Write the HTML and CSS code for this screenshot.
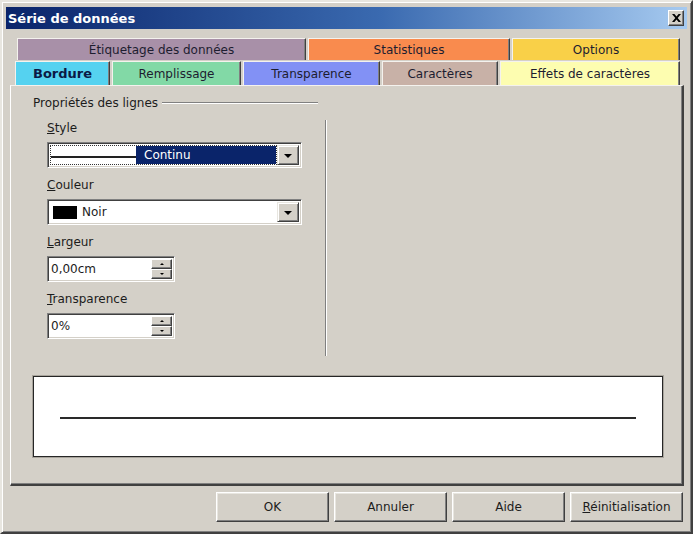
FILE: index.html
```html
<!DOCTYPE html>
<html lang="fr">
<head>
	<meta charset="UTF-8">
	<title>Série de données</title>
	<link rel="stylesheet" href="styles.css">
</head>
<body>
	<div class="window">
		<div class="titlebar">
			<span class="title">Série de données</span>
			<span class="close"><svg width="9" height="8" viewBox="0 0 9 8"><path d="M0 0h2.4l2.1 2.6L6.6 0H9L5.7 4 9 8H6.6L4.5 5.4 2.4 8H0l3.3-4z" fill="#000"/></svg></span>
		</div>

		<div class="tabs">
			<div class="tabrow back">
				<div class="tab t-etiq">Étiquetage des données</div>
				<div class="tab t-stat">Statistiques</div>
				<div class="tab t-opt">Options</div>
			</div>
			<div class="tabrow front">
				<div class="tab t-bord active">Bordure</div>
				<div class="tab t-remp">Remplissage</div>
				<div class="tab t-trans">Transparence</div>
				<div class="tab t-car">Caractères</div>
				<div class="tab t-eff">Effets de caractères</div>
			</div>
		</div>

		<div class="panel">
			<div class="props">
				<div class="props-main">
					<div class="group-head"><span>Propriétés des lignes</span><i class="etch"></i></div>
					<div class="group-body">
						<div class="field">
							<label><u>S</u>tyle</label>
							<div class="select focus">
								<div class="sel-inner">
									<span class="line-preview"><i></i></span>
									<span class="sel-text hl">Continu</span>
								</div>
								<span class="drop"><i class="arrow"></i></span>
							</div>
						</div>
						<div class="field">
							<label><u>C</u>ouleur</label>
							<div class="select">
								<div class="sel-inner">
									<span class="swatch"></span>
									<span class="sel-text">Noir</span>
								</div>
								<span class="drop"><i class="arrow"></i></span>
							</div>
						</div>
						<div class="field">
							<label><u>L</u>argeur</label>
							<div class="spin">
								<span class="spin-text">0,00cm</span>
								<span class="spin-btns"><b><i class="up"></i></b><b><i class="down"></i></b></span>
							</div>
						</div>
						<div class="field">
							<label><u>T</u>ransparence</label>
							<div class="spin">
								<span class="spin-text">0%</span>
								<span class="spin-btns"><b><i class="up"></i></b><b><i class="down"></i></b></span>
							</div>
						</div>
					</div>
				</div>
				<div class="vsep"></div>
			</div>

			<div class="preview"><i></i></div>
		</div>

		<div class="buttons">
			<button>OK</button>
			<button>Annuler</button>
			<button>Aide</button>
			<button><u>R</u>éinitialisation</button>
		</div>
	</div>
</body>
</html>
```

FILE: styles.css
```css
*{margin: 0;padding: 0;box-sizing: border-box;}
body {background: #d4d0c8;font-family: "DejaVu Sans", Verdana, sans-serif;font-size: 12px;color: #1c1c1c;}
.window {width: 693px;height: 534px;padding: 5px 4px 4px 4px;border: 2px solid;border-color: #e8e6e0 #404040 #404040 #e8e6e0;box-shadow: inset 1px 1px #fff, inset -1px -1px #808080;background: #d4d0c8;}

.titlebar {height: 22px;display: flex;align-items: center;justify-content: space-between;padding: 0 3px 0 2px;background: linear-gradient(to right, #0a246a, #3a6ab0 55%, #a6caf0);}
.title {color: #fff;font-weight: bold;font-size: 13px;}
.close {width: 16px;height: 16px;display: flex;align-items: center;justify-content: center;background: #d4d0c8;border: 1px solid;border-color: #fff #404040 #404040 #fff;box-shadow: inset -1px -1px #808080;}

.tabs {margin-top: 9px;}
.tabrow {display: flex;gap: 2px;}
.back {margin-left: 11px;height: 23px;}
.front {margin-left: 9px;height: 24px;}
.tab {display: flex;align-items: center;justify-content: center;border-top: 1px solid #f4f2ee;border-left: 1px solid #f4f2ee;border-right: 1px solid #404040;box-shadow: inset -1px 0 #808080;color: #1d1d30;}
.back .tab {height: 22px;padding-top: 1px;}
.front .tab {height: 24px;}
.t-etiq {width: 289px;background: #a890a8;}
.t-stat {width: 202px;background: #f98b4e;}
.t-opt {width: 168px;background: #f9d048;}
.t-bord {width: 95px;background: #55d2f0;}
.t-remp {width: 129px;background: #82d9a6;}
.t-trans {width: 137px;background: #8291f5;}
.t-car {width: 116px;background: #c8b1a7;}
.t-eff {width: 180px;background: #fdfdb0;}
.tab.active {font-weight: bold;color: #0b1a45;font-size: 13px;}

.panel {margin-left: 4px;width: 674px;height: 401px;padding: 9px 0 0 22px;border-top: 1px solid #f4f2ee;border-left: 1px solid #fff;border-right: 2px solid #404040;border-bottom: 2px solid #404040;box-shadow: inset -1px -1px #808080;}

.props {display: flex;align-items: flex-start;height: 261px;}
.props-main {width: 285px;}
.group-head {display: flex;align-items: center;height: 16px;line-height: 16px;}
.group-head span {padding-right: 4px;}
.etch {flex: 1;height: 2px;border-top: 1px solid #808080;border-bottom: 1px solid #fff;}
.vsep {width: 2px;height: 236px;margin: 25px 0 0 7px;border-left: 1px solid #808080;border-right: 1px solid #fff;}
.group-body {padding-left: 14px;}
.field {margin-top: 9px;}
.field label {display: block;line-height: 16px;margin-bottom: 6px;}

.select {width: 255px;height: 26px;display: flex;padding: 2px;background: #fff;border: 1px solid;border-color: #808080 #fff #fff #808080;box-shadow: inset 1px 1px #404040, inset -1px -1px #d4d0c8;}
.sel-inner {flex: 1;display: flex;align-items: center;padding: 1px;}
.focus .sel-inner {border: 1px dotted #333;padding: 0;}
.line-preview {width: 85px;height: 100%;display: flex;align-items: center;background: #fff;}
.line-preview i {display: block;width: 100%;height: 2px;margin-top: 4px;background: #222;}
.sel-text {flex: 1;height: 100%;display: flex;align-items: center;padding-left: 8px;}
.sel-text.hl {background: #0a246a;color: #fff;}
.swatch {width: 24px;height: 13px;margin-left: 2px;background: #000;}
.select .sel-text:not(.hl) {padding-left: 5px;}
.drop {width: 22px;height: 100%;display: flex;align-items: center;justify-content: center;background: #d4d0c8;border: 1px solid;border-color: #e8e6e0 #404040 #404040 #e8e6e0;box-shadow: inset 1px 1px #fff, inset -1px -1px #808080;}
.arrow {width: 0;height: 0;border-left: 4px solid transparent;border-right: 4px solid transparent;border-top: 4px solid #000;margin-top: 1px;}

.spin {width: 128px;height: 26px;display: flex;padding: 2px;background: #fff;border: 1px solid;border-color: #808080 #fff #fff #808080;box-shadow: inset 1px 1px #404040, inset -1px -1px #d4d0c8;}
.spin-text {flex: 1;display: flex;align-items: center;padding-left: 1px;}
.spin-btns {width: 21px;display: flex;flex-direction: column;}
.spin-btns b {flex: 1;display: flex;align-items: center;justify-content: center;background: #d4d0c8;border: 1px solid;border-color: #fff #404040 #404040 #fff;box-shadow: inset -1px -1px #808080;}
.up {width: 0;height: 0;border-left: 2px solid transparent;border-right: 2px solid transparent;border-bottom: 2px solid #000;}
.down {width: 0;height: 0;border-left: 2px solid transparent;border-right: 2px solid transparent;border-top: 2px solid #000;}

.preview {width: 630px;height: 81px;margin-top: 20px;display: flex;align-items: center;padding: 0 26px;background: #fff;border: 1px solid #262626;box-shadow: 0 0 0 1px #a8a49c;}
.preview i {display: block;width: 100%;height: 2px;margin-top: 2px;background: #2a2a2a;}

.buttons {display: flex;justify-content: flex-end;gap: 5px;margin-top: 6px;padding-right: 4px;}
.buttons button {width: 113px;height: 30px;font-family: "DejaVu Sans", Verdana, sans-serif;font-size: 12px;color: #1c1c1c;background: #d4d0c8;border: 1px solid;border-color: #fff #404040 #404040 #fff;box-shadow: inset -1px -1px #808080, inset 1px 1px #e8e6e0;}
```
